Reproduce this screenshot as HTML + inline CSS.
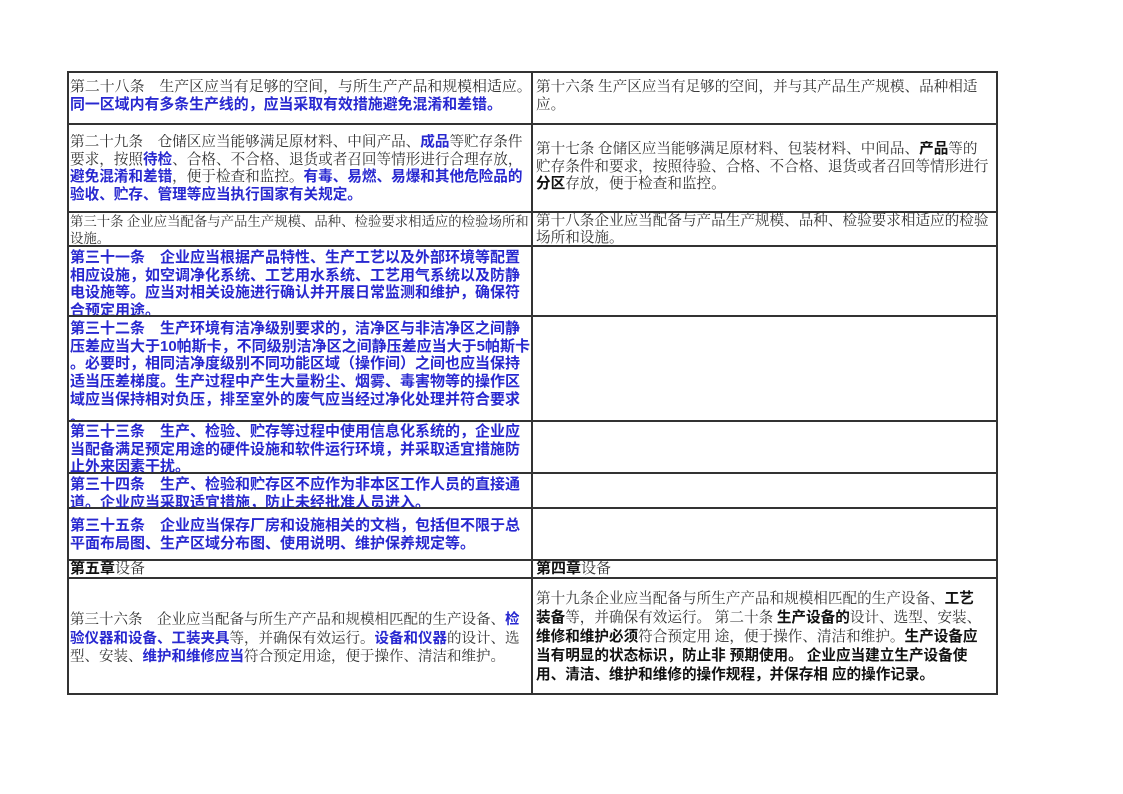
<!DOCTYPE html>
<html><head><meta charset="utf-8"><style>
body{margin:0;width:1123px;height:794px;background:#fff;position:relative;overflow:hidden}
.c{position:absolute;overflow:hidden;white-space:nowrap;font-family:"Liberation Serif","Noto Serif CJK SC",serif;font-size:14.6px;color:#333;line-height:17.7px}
.b{font-family:"Liberation Sans","Noto Sans CJK SC",sans-serif;font-weight:bold;color:#2828d0}
.c.b{font-size:15px}
.k{font-family:"Liberation Sans","Noto Sans CJK SC",sans-serif;font-weight:bold;color:#111}
.h{position:absolute;height:2px;background:#333;left:67px;width:931px}
.v{position:absolute;width:2px;background:#333;top:71px;height:624px}
.s{font-size:13.4px}
</style></head><body>
<div class="v" style="left:67px"></div>
<div class="v" style="left:531px"></div>
<div class="v" style="left:996px"></div>
<div class="h" style="top:71px"></div>
<div class="h" style="top:123px"></div>
<div class="h" style="top:211px"></div>
<div class="h" style="top:245px"></div>
<div class="h" style="top:315px"></div>
<div class="h" style="top:420px"></div>
<div class="h" style="top:472px"></div>
<div class="h" style="top:507px"></div>
<div class="h" style="top:559px"></div>
<div class="h" style="top:577px"></div>
<div class="h" style="top:693px"></div>

<div class="c" style="left:70px;top:79px;width:460px;font-size:14.9px">第二十八条　生产区应当有足够的空间，与所生产产品和规模相适应。<br><span class="b">同一区域内有多条生产线的，应当采取有效措施避免混淆和差错。</span></div>
<div class="c" style="left:536px;top:79px;width:458px">第十六条 生产区应当有足够的空间，并与其产品生产规模、品种相适<br>应。</div>

<div class="c" style="left:70px;top:134px;width:460px">第二十九条　仓储区应当能够满足原材料、中间产品、<span class="b">成品</span>等贮存条件<br>要求，按照<span class="b">待检</span>、合格、不合格、退货或者召回等情形进行合理存放，<br><span class="b">避免混淆和差错</span>，便于检查和监控。<span class="b">有毒、易燃、易爆和其他危险品的<br>验收、贮存、管理等应当执行国家有关规定。</span></div>
<div class="c" style="left:536px;top:141px;width:458px">第十七条 仓储区应当能够满足原材料、包装材料、中间品、<span class="k">产品</span>等的<br>贮存条件和要求，按照待验、合格、不合格、退货或者召回等情形进行<br><span class="k">分区</span>存放，便于检查和监控。</div>

<div class="c s" style="left:70px;top:213px;width:460px;height:32px;line-height:17px">第三十条 企业应当配备与产品生产规模、品种、检验要求相适应的检验场所和<br>设施。</div>
<div class="c" style="left:536px;top:213px;width:458px;height:32px;line-height:17px">第十八条企业应当配备与产品生产规模、品种、检验要求相适应的检验<br>场所和设施。</div>

<div class="c b" style="left:70px;top:249px;width:460px;height:66px">第三十一条　企业应当根据产品特性、生产工艺以及外部环境等配置<br>相应设施，如空调净化系统、工艺用水系统、工艺用气系统以及防静<br>电设施等。应当对相关设施进行确认并开展日常监测和维护，确保符<br>合预定用途。</div>

<div class="c b" style="left:70px;top:320px;width:460px;height:100px">第三十二条　生产环境有洁净级别要求的，洁净区与非洁净区之间静<br>压差应当大于10帕斯卡，不同级别洁净区之间静压差应当大于5帕斯卡<br>。必要时，相同洁净度级别不同功能区域（操作间）之间也应当保持<br>适当压差梯度。生产过程中产生大量粉尘、烟雾、毒害物等的操作区<br>域应当保持相对负压，排至室外的废气应当经过净化处理并符合要求<br>。</div>

<div class="c b" style="left:70px;top:423px;width:460px;height:49px">第三十三条　生产、检验、贮存等过程中使用信息化系统的，企业应<br>当配备满足预定用途的硬件设施和软件运行环境，并采取适宜措施防<br>止外来因素干扰。</div>

<div class="c b" style="left:70px;top:476px;width:460px;height:31px">第三十四条　生产、检验和贮存区不应作为非本区工作人员的直接通<br>道。企业应当采取适宜措施，防止未经批准人员进入。</div>

<div class="c b" style="left:70px;top:517px;width:460px">第三十五条　企业应当保存厂房和设施相关的文档，包括但不限于总<br>平面布局图、生产区域分布图、使用说明、维护保养规定等。</div>

<div class="c" style="left:70px;top:560px;width:460px;line-height:18px;font-size:15px"><span class="k">第五章</span>设备</div>
<div class="c" style="left:536px;top:560px;width:458px;line-height:18px;font-size:15px"><span class="k">第四章</span>设备</div>

<div class="c" style="left:70px;top:611px;width:460px;line-height:18.5px;font-size:14.5px">第三十六条　企业应当配备与所生产产品和规模相匹配的生产设备、<span class="b">检</span><br><span class="b">验仪器和设备、工装夹具</span>等，并确保有效运行。<span class="b">设备和仪器</span>的设计、选<br>型、安装、<span class="b">维护和维修应当</span>符合预定用途，便于操作、清洁和维护。</div>
<div class="c" style="left:536px;top:590px;width:458px;line-height:19px;font-size:14.6px">第十九条企业应当配备与所生产产品和规模相匹配的生产设备、<span class="k">工艺</span><br><span class="k">装备</span>等，并确保有效运行。 第二十条 <span class="k">生产设备的</span>设计、选型、安装、<br><span class="k">维修和维护必须</span>符合预定用 途，便于操作、清洁和维护。<span class="k">生产设备应</span><br><span class="k">当有明显的状态标识，防止非 预期使用。 企业应当建立生产设备使</span><br><span class="k">用、清洁、维护和维修的操作规程，并保存相 应的操作记录。</span></div>
</body></html>
